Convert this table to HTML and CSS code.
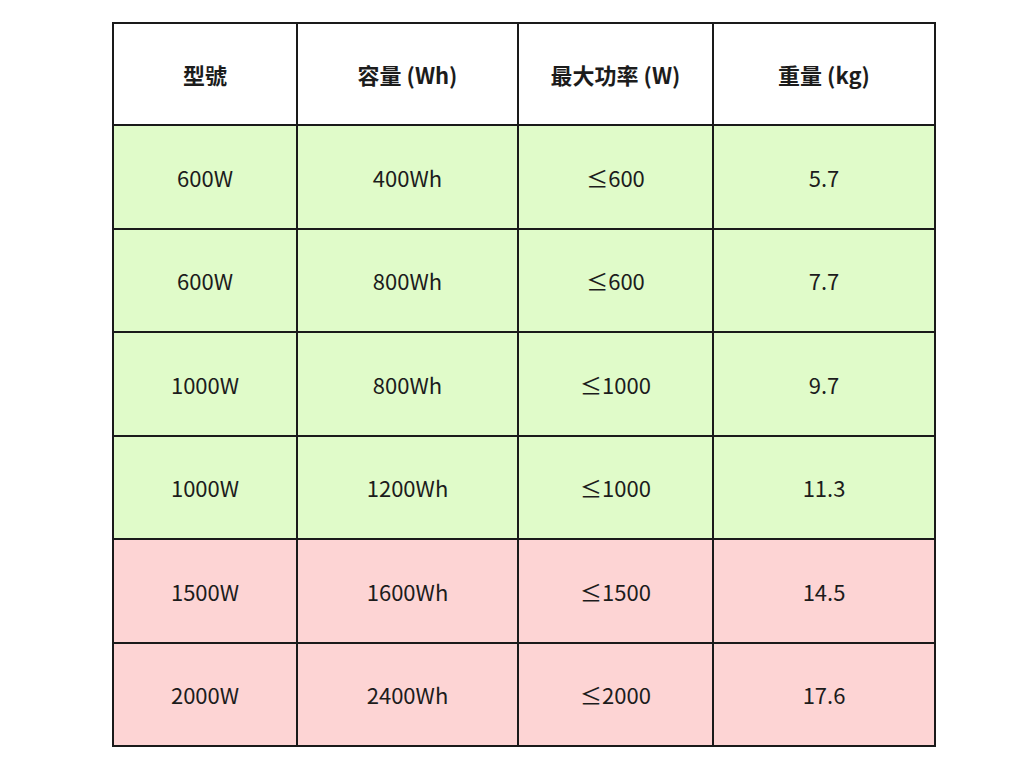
FILE: index.html
```html
<!DOCTYPE html>
<html lang="zh-Hant">
<head>
<meta charset="utf-8">
<title>規格表</title>
<link rel="stylesheet" href="styles.css">
</head>
<body>
<div class="spec">
  <div class="cell head">型號</div>
  <div class="cell head">容量 (Wh)</div>
  <div class="cell head">最大功率 (W)</div>
  <div class="cell head">重量 (kg)</div>

  <div class="cell green">600W</div>
  <div class="cell green">400Wh</div>
  <div class="cell green">≤600</div>
  <div class="cell green">5.7</div>

  <div class="cell green">600W</div>
  <div class="cell green">800Wh</div>
  <div class="cell green">≤600</div>
  <div class="cell green">7.7</div>

  <div class="cell green">1000W</div>
  <div class="cell green">800Wh</div>
  <div class="cell green">≤1000</div>
  <div class="cell green">9.7</div>

  <div class="cell green">1000W</div>
  <div class="cell green">1200Wh</div>
  <div class="cell green">≤1000</div>
  <div class="cell green">11.3</div>

  <div class="cell pink">1500W</div>
  <div class="cell pink">1600Wh</div>
  <div class="cell pink">≤1500</div>
  <div class="cell pink">14.5</div>

  <div class="cell pink">2000W</div>
  <div class="cell pink">2400Wh</div>
  <div class="cell pink">≤2000</div>
  <div class="cell pink">17.6</div>
</div>
</body>
</html>
```
FILE: styles.css
```css
html, body {
  margin: 0;
  padding: 0;
  background: #ffffff;
}

body {
  padding: 22px 0 0 112px;
  font-family: "Noto Sans CJK TC", "Noto Sans", sans-serif;
  color: #1c1c1c;
}

.spec {
  display: grid;
  width: 824px;
  box-sizing: border-box;
  grid-template-columns: 182px 219px 193px 220px;
  grid-template-rows: 100px repeat(6, 101.5px);
  gap: 2px;
  padding: 2px;
  background: #1a1a1a;
}

.cell {
  display: flex;
  align-items: center;
  justify-content: center;
  font-size: 22px;
  line-height: 1;
}

.head {
  background: #ffffff;
  font-weight: 700;
}

.green {
  background: #e0fbc9;
}

.pink {
  background: #fdd4d4;
}
```
